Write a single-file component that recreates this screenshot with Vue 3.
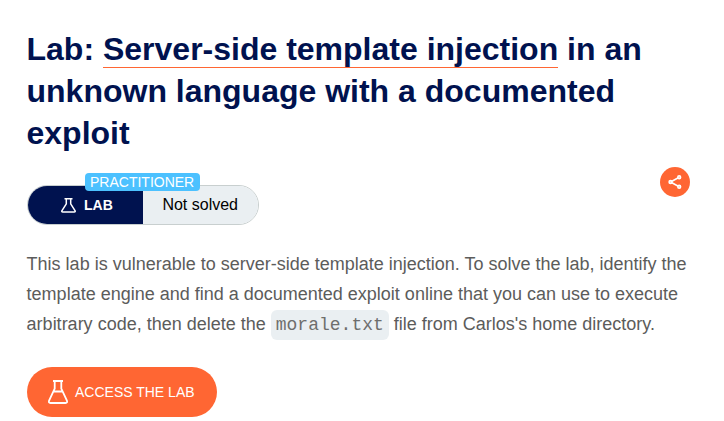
<script setup>
</script>

<template>
  <main class="page">
    <h1 class="title">Lab: <a class="topic">Server-side template injection</a> in an unknown language with a documented exploit</h1>
    <div class="meta">
      <div class="status">
        <div class="kind">
          <svg class="flask-small" viewBox="0 0 15 15" fill="none" stroke="#fff" stroke-width="1.5" stroke-linejoin="round">
            <path d="M3.5.8h8M5.3 1v4.800L1 12.600q-.7 1.500.8 1.500h11.400q1.500 0 .8-1.500L9.700 5.800V1" />
          </svg>
          <span class="kind-text">LAB</span>
        </div>
        <div class="state"><span class="state-text">Not solved</span></div>
        <span class="level"><span class="level-text">PRACTITIONER</span></span>
      </div>
      <div class="share">
        <svg class="share-icon" viewBox="0 0 14 14" fill="none" stroke="#fff">
          <path stroke-width="1.600" d="M11.200 2.200L2.500 7l8.700 4.800" />
          <g fill="#ffb299" stroke-width="1.600">
            <circle cx="11.200" cy="2.200" r="1.400" />
            <circle cx="2.500" cy="7" r="1.400" />
            <circle cx="11.200" cy="11.800" r="1.400" />
          </g>
        </svg>
      </div>
    </div>
    <p class="text">This lab is vulnerable to server-side template injection. To solve the lab, identify the template engine and find a documented exploit online that you can use to execute arbitrary code, then delete the <code class="file">morale.txt</code> file from Carlos's home directory.</p>
    <a class="button">
      <svg class="flask" viewBox="0 0 20 24" fill="none" stroke="#fff" stroke-width="1.800" stroke-linejoin="round">
        <path d="M5 1h10M6.700 1.200v7.500L1.200 20.400q-1 2.600 1.300 2.600h15q2.300 0 1.300-2.600L13.300 8.700V1.200M5 11.500h10" />
      </svg>
      <span class="button-text">ACCESS THE LAB</span>
    </a>
  </main>
</template>

<style>
body {
  margin: 0;
  background: #fff;
}
</style>

<style scoped>
.page {
  box-sizing: border-box;
  width: 724px;
  height: 421px;
  padding: 28px 27px 0;
  overflow: hidden;
  font-family: "Liberation Sans", Arial, sans-serif;
}
.title {
  margin: 0 0 0 -0.5px;
  height: 126px;
  font-size: 32px;
  line-height: 42px;
  color: #00124f;
}
.topic {
  border-bottom: 1px solid #ff6633;
}
.meta {
  display: flex;
  justify-content: space-between;
  height: 71px;
  margin-top: 13px;
  margin-right: 7px;
}
.status {
  position: relative;
  box-sizing: border-box;
  display: flex;
  width: 232px;
  height: 40px;
  margin-top: 18px;
  border: 1px solid #c8cfcf;
  border-radius: 20px;
}
.kind {
  display: flex;
  align-items: center;
  box-sizing: border-box;
  width: 115px;
  padding-left: 33px;
  background: #00124f;
  border-radius: 19px 0 0 19px;
  color: #fff;
}
.flask-small {
  width: 15px;
  height: 15px;
  margin-right: 8px;
}
.kind-text {
  font-size: 14px;
  font-weight: 700;
}
.state {
  flex: 1;
  padding-left: 19.400px;
  background: #eaeff2;
  border-radius: 0 19px 19px 0;
  line-height: 37px;
  color: #000;
}
.state-text {
  font-size: 16px;
}
.level {
  position: absolute;
  left: 57px;
  top: -13px;
  box-sizing: border-box;
  width: 115px;
  height: 18px;
  padding-left: 5px;
  background: #4cc1ff;
  border-radius: 4px;
  line-height: 18px;
  color: #fff;
}
.level-text {
  display: block;
  font-size: 14px;
}
.share {
  display: flex;
  align-items: center;
  justify-content: center;
  width: 30px;
  height: 30px;
  border-radius: 50%;
  background: #ff6633;
}
.share-icon {
  width: 14px;
  height: 14px;
}
.text {
  margin: 11px 0 0 -0.4px;
  height: 90px;
  font-size: 18px;
  line-height: 30px;
  color: #5c5c5b;
}
.file {
  padding: 5px;
  border-radius: 6px;
  background: #eaeff2;
  font-family: "Liberation Mono", monospace;
  font-size: 18px;
  color: #6e6e6d;
}
.button {
  display: flex;
  align-items: center;
  box-sizing: border-box;
  width: 190px;
  height: 50px;
  margin-top: 28px;
  padding-left: 21px;
  border-radius: 25px;
  background: #ff6633;
  color: #fff;
}
.flask {
  width: 20px;
  height: 24px;
  margin-right: 7px;
}
.button-text {
  font-size: 14px;
}
</style>
